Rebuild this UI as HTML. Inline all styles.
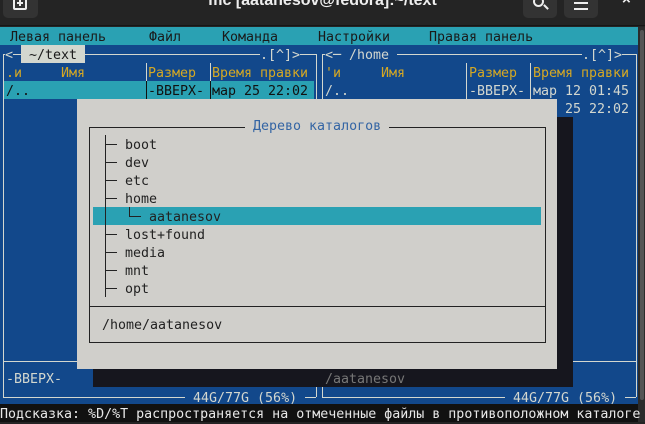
<!DOCTYPE html>
<html><head><meta charset="utf-8"><style>
*{margin:0;padding:0;box-sizing:border-box}
body{width:645px;height:422px;overflow:hidden;background:#242424;position:relative;font-family:"DejaVu Sans Mono","Liberation Mono",monospace;font-size:13.3px;line-height:18px;color:#d3d7cf}
.a{position:absolute;white-space:pre}
.a:not(:empty){padding-top:2px}
.l{position:absolute;background:#d3d7cf}
.y{color:#d5a824}
</style></head><body>
<!-- title bar -->
<div class="a" style="left:0;top:0;width:645px;height:26px;background:#242424;border-bottom:1px solid #161616"></div>
<div class="a" style="left:3px;top:-6px;width:35px;height:24px;background:#333;border-radius:5px"></div>
<div class="a" style="left:13px;top:-3px;width:14px;height:13px;border:2px solid #eee;border-radius:2px"></div>
<div class="a" style="left:17px;top:2px;width:6px;height:2px;background:#eee"></div>
<div class="a" style="left:19px;top:0px;width:2px;height:6px;background:#eee"></div>
<div class="a" style="left:0;width:645px;top:-10px;text-align:center;font-family:'Liberation Sans',sans-serif;font-size:16px;font-weight:bold;color:#eee">mc [aatanesov@fedora]:~/text</div>
<div class="a" style="left:523px;top:-6px;width:34px;height:24px;background:#333;border-radius:5px"></div>
<div class="a" style="left:533px;top:-4px;width:11px;height:11px;border:2px solid #eee;border-radius:50%"></div>
<div class="a" style="left:543px;top:6px;width:6px;height:2px;background:#eee;transform:rotate(45deg)"></div>
<div class="a" style="left:564px;top:-6px;width:34px;height:24px;background:#333;border-radius:5px"></div>
<div class="a" style="left:574px;top:2px;width:14px;height:2px;background:#eee"></div>
<div class="a" style="left:574px;top:8px;width:14px;height:2px;background:#eee"></div>
<div class="a" style="left:622px;top:-11px;font-family:'Liberation Sans',sans-serif;font-size:15px;font-weight:bold;color:#eee">×</div>
<!-- terminal -->
<div class="a" style="left:0;top:27px;width:638px;height:395px;background:#12488b"></div>
<div class="a" style="left:638px;top:27px;width:7px;height:395px;background:#2b2b2b"></div>
<div class="a" style="left:640px;top:30px;width:4px;height:370px;background:#555;border-radius:2px"></div>
<div class="a" style="left:0;top:27px;width:638px;height:18px;background:#2aa1b3"></div>
<div class="a" style="left:10px;top:27px;color:#1a1a1a">Левая панель</div>
<div class="a" style="left:149px;top:27px;color:#1a1a1a">Файл</div>
<div class="a" style="left:222px;top:27px;color:#1a1a1a">Команда</div>
<div class="a" style="left:318px;top:27px;color:#1a1a1a">Настройки</div>
<div class="a" style="left:429px;top:27px;color:#1a1a1a">Правая панель</div>
<!-- left panel frame -->
<div class="l" style="left:3px;top:54px;width:313px;height:1px"></div>
<div class="l" style="left:3px;top:54px;width:1px;height:343px"></div>
<div class="l" style="left:316px;top:54px;width:1px;height:343px"></div>
<div class="l" style="left:3px;top:397px;width:313px;height:1px"></div>
<div class="l" style="left:3px;top:361px;width:313px;height:1px"></div>
<div class="l" style="left:146px;top:63px;width:1px;height:298px"></div>
<div class="l" style="left:210px;top:63px;width:1px;height:298px"></div>
<div class="a" style="left:5px;top:45px;background:#12488b">&lt;</div>
<div class="a" style="left:21px;top:45px;width:64px;height:18px;background:#d3d7cf;color:#1a1a1a"> ~/text</div>
<div class="a" style="left:260px;top:45px;background:#12488b">.[^]&gt;</div>
<div class="a y" style="left:6px;top:63px">.и</div>
<div class="a y" style="left:61px;top:63px">Имя</div>
<div class="a y" style="left:148px;top:63px">Размер</div>
<div class="a y" style="left:212px;top:63px">Время правки</div>
<div class="a" style="left:4px;top:81px;width:310px;height:18px;background:#2aa1b3"></div>
<div class="a" style="left:146px;top:81px;width:1px;height:18px;background:#111"></div>
<div class="a" style="left:210px;top:81px;width:1px;height:18px;background:#111"></div>
<div class="a" style="left:6px;top:81px;color:#111">/..</div>
<div class="a" style="left:148px;top:81px;color:#111">-ВВЕРХ-</div>
<div class="a" style="left:212px;top:81px;color:#111">мар 25 22:02</div>
<div class="a" style="left:6px;top:369px">-ВВЕРХ-</div>
<div class="a" style="left:185px;top:388px;background:#12488b"> 44G/77G (56%) </div>
<!-- right panel -->
<div class="l" style="left:322px;top:54px;width:314px;height:1px"></div>
<div class="l" style="left:322px;top:54px;width:1px;height:343px"></div>
<div class="l" style="left:636px;top:54px;width:1px;height:343px"></div>
<div class="l" style="left:322px;top:397px;width:314px;height:1px"></div>
<div class="l" style="left:322px;top:361px;width:314px;height:1px"></div>
<div class="l" style="left:466px;top:63px;width:1px;height:298px"></div>
<div class="l" style="left:530px;top:63px;width:1px;height:298px"></div>
<div class="a" style="left:325px;top:45px;background:#12488b">&lt;─ /home </div>
<div class="a" style="left:582px;top:45px;background:#12488b">.[^]&gt;</div>
<div class="a y" style="left:325px;top:63px">'и</div>
<div class="a y" style="left:381px;top:63px">Имя</div>
<div class="a y" style="left:469px;top:63px">Размер</div>
<div class="a y" style="left:533px;top:63px">Время правки</div>
<div class="a" style="left:325px;top:81px">/..</div>
<div class="a" style="left:469px;top:81px">-ВВЕРХ-</div>
<div class="a" style="left:533px;top:81px">мар 12 01:45</div>
<div class="a" style="left:533px;top:99px">мар 25 22:02</div>
<div class="a" style="left:505px;top:388px;background:#12488b"> 44G/77G (56%) </div>
<!-- shadow -->
<div class="a" style="left:555px;top:117px;width:18px;height:270px;background:#16161e"></div>
<div class="a" style="left:93px;top:369px;width:480px;height:18px;background:#16161e"></div>
<div class="a" style="left:325px;top:369px;color:#777">/aatanesov</div>
<!-- dialog -->
<div class="a" style="left:77px;top:99px;width:480px;height:270px;background:#d0cfcb"></div>
<div class="a" style="left:89px;top:127px;width:457px;height:216px;border:1px solid #222"></div>
<div class="a" style="left:89px;top:306px;width:457px;height:1px;background:#222"></div>
<div class="a" style="left:245px;top:116px;background:#d0cfcb;color:#3465a4"> Дерево каталогов </div>
<div class="a" style="left:93px;top:207px;width:448px;height:18px;background:#2aa1b3"></div>
<div class="a" style="left:105px;top:135px;width:1px;height:162px;background:#222"></div>
<div class="a" style="left:105px;top:144px;width:12px;height:1px;background:#222"></div>
<div class="a" style="left:105px;top:162px;width:12px;height:1px;background:#222"></div>
<div class="a" style="left:105px;top:180px;width:12px;height:1px;background:#222"></div>
<div class="a" style="left:105px;top:198px;width:12px;height:1px;background:#222"></div>
<div class="a" style="left:105px;top:234px;width:12px;height:1px;background:#222"></div>
<div class="a" style="left:105px;top:252px;width:12px;height:1px;background:#222"></div>
<div class="a" style="left:105px;top:270px;width:12px;height:1px;background:#222"></div>
<div class="a" style="left:105px;top:288px;width:12px;height:1px;background:#222"></div>
<div class="a" style="left:129px;top:207px;width:1px;height:9px;background:#222"></div>
<div class="a" style="left:129px;top:216px;width:12px;height:1px;background:#222"></div>
<div class="a" style="left:125px;top:135px;color:#222">boot
dev
etc
home</div>
<div class="a" style="left:149px;top:207px;color:#222">aatanesov</div>
<div class="a" style="left:125px;top:225px;color:#222">lost+found
media
mnt
opt</div>
<div class="a" style="left:102px;top:315px;color:#222">/home/aatanesov</div>
<!-- hint -->
<div class="a" style="left:0;top:404px;width:638px;height:18px;background:#111;color:#e8e8e8">Подсказка: %D/%T распространяется на отмеченные файлы в противоположном каталоге</div>
</body></html>
